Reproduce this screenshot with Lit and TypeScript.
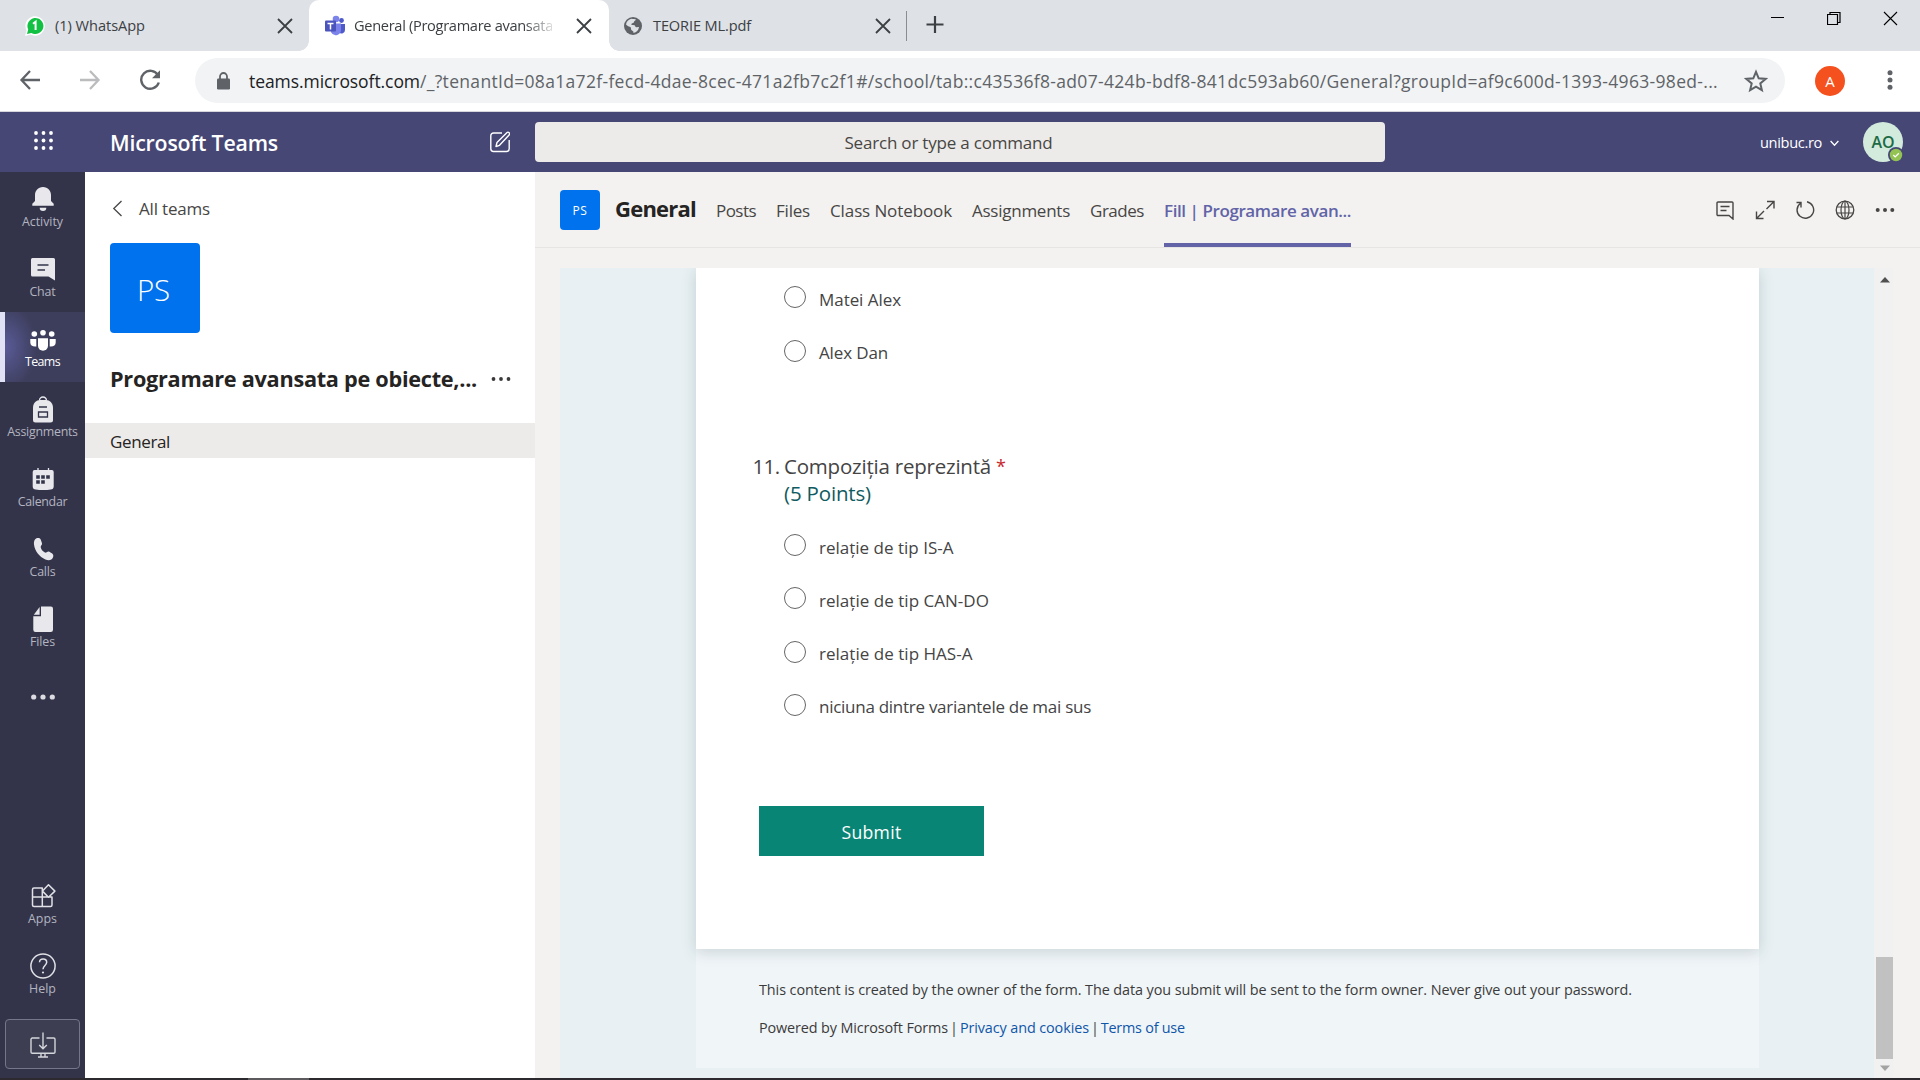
import { LitElement, html, css, svg } from "lit";
import { customElement, property } from "lit/decorators.js";

/** One line of text whose tracking is computed so that it fills a given width. */
@customElement("fit-text")
class FitText extends LitElement {
  @property() text = "";
  @property({ type: Number }) w = 0;
  static styles = css`
    :host { display: block; white-space: pre; flex: none; }
    .line { display: inline-block; vertical-align: top; }
  `;
  firstUpdated() {
    if (!this.w) return;
    const el = this.renderRoot.querySelector(".line") as HTMLElement;
    const free = this.w - el.getBoundingClientRect().width;
    el.style.letterSpacing = `${free / [...this.text].length}px`;
  }
  render() {
    return html`<span class="line">${this.text}</span>`;
  }
}

const t = (text: string, w = 0, cls = "") =>
  html`<fit-text class=${cls} .text=${text} .w=${w}></fit-text>`;

const icon = (w: number, h: number, body: unknown, cls = "") =>
  html`<svg class="ic ${cls}" width=${w} height=${h} viewBox="0 0 ${w} ${h}" fill="none">${body}</svg>`;

const closeX = icon(16, 16, svg`<path d="M1 1 15 15M15 1 1 15" stroke="#3c4043" stroke-width="1.8"/>`, "close");

const whatsapp = icon(20, 20, svg`
  <path d="M0 20 1.5 14.500A9.700 9.700 0 1 1 5.500 18.500Z" fill="#fff"/>
  <path d="M2 18 3.200 13.500A8 8 0 1 1 6.300 16.900Z" fill="#12c143"/>
  <path d="M8 7.800 10.600 5.800V14" stroke="#fff" stroke-width="2"/>`);
const teamsLogo = icon(22, 22, svg`
  <circle cx="17.500" cy="5.500" r="2.400" fill="#5059c9"/>
  <circle cx="12" cy="4" r="3.300" fill="#7b83eb"/>
  <path d="M15 9h6v6a3.500 3.500 0 0 1-6 2.500Z" fill="#5059c9"/>
  <path d="M7 8.500h10v7a5.300 5.300 0 0 1-10 1.800Z" fill="#7b83eb"/>
  <rect x="1" y="5.500" width="11" height="11" rx="1" fill="#4b53bc"/>
  <path d="M3.500 8.500h6M6.500 8.500v6" stroke="#fff" stroke-width="1.500"/>`);
const globeTab = icon(18, 18, svg`
  <circle cx="9" cy="9" r="9" fill="#5f6368"/>
  <path d="M7.500 1.800c2 .4 3.500.2 4.500.8-1 1.500-2 1.500-2.200 3-.8 1-2.300.6-2.600 2 1 1 3.500 0 4 1.600.3 1.300 2.300.9 3.800.8-.4 3-2.500 5.500-5.500 6 0-2-.5-2-1.500-2.600-1.800-1-.3-2.600-1.800-3.300C4.500 9.500 3 8.500 2 7.500 2.500 4.500 4.500 2.300 7.500 1.800Z" fill="#dee1e6"/>`);

const rail = {
  activity: icon(24, 26, svg`<path d="M12 1c5 0 8 3.700 8 8.200v5.800l2.700 2.800v2H1.300v-2l2.700-2.800V9.200C4 4.700 7 1 12 1Z" fill="#e8e8ec"/><path d="M8.700 21.800h6.600a3.300 3.300 0 0 1-6.600 0Z" fill="#e8e8ec"/>`),
  chat: icon(26, 26, svg`<path d="M2.500 2h21a1.500 1.500 0 0 1 1.500 1.500V24.500l-6.500-4H2.500A1.500 1.500 0 0 1 1 19V3.500A1.500 1.500 0 0 1 2.500 2Z" fill="#e8e8ec"/><path d="M7.500 9h11M7.500 14h7.500" stroke="#33344a" stroke-width="1.300"/>`),
  teams: icon(26, 26, svg`<g fill="#fff" transform="translate(0 1)"><circle cx="4.300" cy="7" r="2.800"/><circle cx="13" cy="5.800" r="2.800"/><circle cx="21.700" cy="7" r="2.800"/><path d="M8 11.300h10v7.500a5 5 0 0 1-10 0Z"/><path d="M.3 12h6v7.500C2.800 20 .3 18.500.3 15.500ZM25.700 12h-6v7.500c3.500.5 6-1 6-4Z"/></g>`),
  assignments: icon(24, 30, svg`<g transform="translate(0 2)"><path d="M8.500 4.500a3.500 3.500 0 0 1 7 0" stroke="#e8e8ec" stroke-width="1.300"/><path d="M2 11.500C2 7 5.500 4 9 4h6c3.500 0 7 3 7 7.500V24a2.500 2.500 0 0 1-2.500 2.500h-15A2.500 2.500 0 0 1 2 24Z" fill="#e8e8ec"/><path d="M8 11h8M7.500 16h9v5h-9Z" stroke="#33344a" stroke-width="1.300"/></g>`),
  calendar: icon(24, 26, svg`<path d="M7 2v3M17.500 2v3" stroke="#e8e8ec" stroke-width="1.300"/><path d="M3.500 4h17A2 2 0 0 1 22.700 6v14.500c0 2-1.200 2.700-3 3-4.500.8-10.500.8-15 0-1.800-.3-3-1-3-3V6A2 2 0 0 1 3.500 4Z" fill="#e8e8ec"/><path d="M5.200 9.200h3.600v3.500H5.200ZM10.200 9.200h3.600v3.500h-3.600ZM15.200 9.200h3.600v3.500h-3.600ZM5.200 14.200h3.600v3.500H5.200ZM10.200 14.200h3.600v3.500h-3.600Z" fill="#33344a"/>`),
  calls: icon(24, 26, svg`<path d="M4.200 3.200C5.500 1.800 8.500 1.300 9.700 3.500l1.300 3.800c.4 1.700-1.600 2.500-1.300 4 .5 2.400 2.300 4.300 4.200 5.200 1.600.7 2.300-1.200 4-.9l3.300 2c1.800 1.400 1.200 3.600.2 5-1.500 2-4.600 1.900-7 .8C8.500 20.800 3.800 15 3 8.500 2.800 6.500 3 4.500 4.200 3.200Z" fill="#e8e8ec"/>`),
  files: icon(24, 28, svg`<path d="M10 1.500h9.700A2.200 2.200 0 0 1 22 3.700v21a2.200 2.200 0 0 1-2.200 2.200H4.500A2.200 2.200 0 0 1 2.300 24.700V11.300H10Z" fill="#e8e8ec"/><path d="M8.600 2v7.800H2.800Z" fill="#e8e8ec"/>`),
  more: icon(26, 8, svg`<g fill="#dcdce2"><circle cx="3.700" cy="4" r="2.600"/><circle cx="13" cy="4" r="2.600"/><circle cx="22.300" cy="4" r="2.600"/></g>`),
  apps: icon(26, 26, svg`<path d="M12.300 5H4A1.500 1.500 0 0 0 2.500 6.500V22A1.500 1.500 0 0 0 4 23.500H20.500A1.500 1.500 0 0 0 22 22V14H12.300ZM2.500 14H12.300V23.500M18.500 1.700 24.900 8.100 18.500 14.200 12.500 8.100Z" stroke="#e0e0e6" stroke-width="1.500" stroke-linejoin="round"/>`),
  help: icon(26, 26, svg`<circle cx="13" cy="13" r="12.100" stroke="#e0e0e6" stroke-width="1.500"/><path d="M9.500 9.200C9.700 5 16.700 5 16.700 9.300c0 3.200-3.700 3.300-3.700 7" stroke="#e0e0e6" stroke-width="1.500"/><circle cx="13" cy="19.500" r="1.100" fill="#e0e0e6"/>`),
  download: icon(26, 28, svg`<path d="M9.500 7H2.300A1.300 1.300 0 0 0 1 8.300V21a1.300 1.300 0 0 0 1.300 1.300H23.700A1.300 1.300 0 0 0 25 21V8.300A1.300 1.300 0 0 0 23.700 7H16.500M13 1.500V17.500M9.200 14 13 17.800 16.800 14M11 22.300V26M15 22.300V26M8 26h10" stroke="#d5d5dc" stroke-width="1.400"/>`),
};

interface RailItem { label: string; w: number; icon: unknown; active?: boolean }
const TOP_ITEMS: RailItem[] = [
  { label: "Activity", w: 41, icon: rail.activity },
  { label: "Chat", w: 26, icon: rail.chat },
  { label: "Teams", w: 35, icon: rail.teams, active: true },
  { label: "Assignments", w: 70.5, icon: rail.assignments },
  { label: "Calendar", w: 49.5, icon: rail.calendar },
  { label: "Calls", w: 26, icon: rail.calls },
  { label: "Files", w: 25, icon: rail.files },
];
const BOTTOM_ITEMS: RailItem[] = [
  { label: "Apps", w: 29, icon: rail.apps },
  { label: "Help", w: 27, icon: rail.help },
];
const CHANNEL_TABS: [string, number][] = [
  ["Posts", 40], ["Files", 34], ["Class Notebook", 122], ["Assignments", 98], ["Grades", 54],
];
const ANSWERS: [string, number][] = [
  ["relație de tip IS-A", 134.5],
  ["relație de tip CAN-DO", 170],
  ["relație de tip HAS-A", 153.5],
  ["niciuna dintre variantele de mai sus", 272],
];

@customElement("app-root")
class AppRoot extends LitElement {
  static styles = css`
    :host {
      display: flex; flex-direction: column; width: 1920px; height: 1080px; overflow: hidden;
      font-family: "Open Sans", "Noto Sans", sans-serif; font-size: 17px; color: #252423; background: #fff;
    }
    * { box-sizing: border-box; }
    .ic { display: block; flex: none; }

    .strip { display: flex; height: 51px; background: #dee1e6; padding-left: 10px; font-size: 14.600px; color: #3c4043; }
    .tab { display: flex; align-items: center; width: 299px; padding: 1px 16px 0 15px; }
    .tab fit-text { margin-left: 10px; padding-bottom: 2px; }
    .tab .close { margin-left: auto; }
    .tab.on { position: relative; width: 300px; background: #fff; border-radius: 10px 10px 0 0; padding-right: 17px; }
    .tab.on::before, .tab.on::after { content: ""; position: absolute; bottom: 0; width: 10px; height: 10px; }
    .tab.on::before { left: -10px; background: radial-gradient(circle at 0 0, transparent 9.500px, #fff 10px); }
    .tab.on::after { right: -10px; background: radial-gradient(circle at 100% 0, transparent 9.500px, #fff 10px); }
    .clip { width: 198px; overflow: hidden; margin-left: 8px; -webkit-mask-image: linear-gradient(to right, #000 170px, transparent 204px); mask-image: linear-gradient(to right, #000 170px, transparent 204px); }
    .clip fit-text { margin: 0; }
    .tab.last { width: 297px; padding-right: 15px; }
    .tab.last fit-text { margin-left: 11px; }
    .rule { width: 1px; height: 30px; margin-top: 11px; background: #8a8d91; }
    .plus { margin: 15px 0 0 18px; }
    .win { display: flex; margin-left: auto; padding: 11px 22px 0 0; gap: 42px; }

    .bar { display: flex; align-items: center; height: 61px; border-bottom: 1px solid #d5d7db; padding: 0 20px 2px 19px; background: #fff; }
    .nav { display: flex; gap: 38px; width: 176px; }
    .omni { display: flex; align-items: center; width: 1590px; height: 45px; margin-top: 1px; border-radius: 23px; background: #f1f3f4; padding: 0 17px 0 22px; }
    .url { display: flex; margin-left: 19px; padding-top: 1px; color: #5f6368; font-size: 17.500px; }
    .url .host { color: #202124; }
    .omni .star { margin-left: auto; }
    .omni .lock { margin-top: 1px; }
    .me { display: grid; place-items: center; width: 30px; height: 30px; margin: 1px 0 0 30px; border-radius: 50%; background: #f4511e; color: #fff; font-size: 15px; }
    .kebab { margin-left: auto; }

    .head { display: flex; align-items: center; height: 60px; background: #464775; color: #fff; padding: 0 17px 0 34px; }
    .brand { margin-left: 56px; padding-top: 1px; font-size: 21.300px; font-weight: 600; width: 380px; }
    .search { display: grid; place-items: center; width: 850px; height: 40px; margin-left: 25px; border-radius: 4px; background: #ecebe9; color: #484644; padding-right: 23px; }
    .org { margin-left: auto; font-size: 14.600px; }
    .down { margin: 2px 0 0 8px; }
    .pic { position: relative; display: grid; place-items: center; width: 40px; height: 40px; margin-left: 24px; border-radius: 50%; background: #d2ebdd; color: #1d6b45; font-size: 16px; font-weight: 600; padding-bottom: 1px; }
    .badge { position: absolute; right: -1px; bottom: -1px; }

    .body { display: flex; flex: none; height: 906px; }
    .rail { display: flex; flex-direction: column; width: 85px; background: #33344a; color: #b4b4c0; font-size: 12.400px; }
    .item { display: flex; flex-direction: column; align-items: center; height: 70px; }
    .item .box { display: grid; place-items: center; height: 42px; padding-top: 11px; }
    .item fit-text { line-height: 16px; }
    .item.on { color: #fff; border-left: 5px solid #e2e2f6; padding-right: 5px; background: radial-gradient(ellipse 32px 44px at 0 50%, #5a5b98, #3d3e5c); }
    .more { display: grid; place-items: center; height: 70px; }
    .push { margin-top: auto; }
    .get { display: grid; place-items: center; width: 75px; height: 50px; margin: 10px 5px 9px; border: 1px solid #75768a; border-radius: 4px; background: #3d3e52; padding-top: 1px; }

    .team { width: 450px; background: #fff; }
    .back { display: flex; align-items: center; height: 71px; padding: 2px 0 0 27px; color: #484644; }
    .back fit-text { margin-left: 16px; }
    .tile { display: grid; place-items: center; width: 90px; height: 90px; margin-left: 25px; border-radius: 4px; background: #0072ed; color: #fff; font-size: 29.500px; font-weight: 300; padding: 2px 3px 0 0; }
    .name { display: flex; align-items: center; height: 90px; padding-left: 25px; font-size: 21.700px; font-weight: 700; }
    .name .ic { margin: 1px 0 0 14px; }
    .chan { display: flex; align-items: center; height: 35px; padding: 1px 0 0 25px; background: #edebe9; }

    .main { display: flex; flex-direction: column; width: 1385px; background: #f3f2f1; }
    .tabs { display: flex; height: 76px; border-bottom: 1px solid #e6e5e3; padding: 0 25px 0 25px; color: #484644; }
    .mini { display: grid; place-items: center; width: 40px; height: 40px; margin-top: 18px; border-radius: 4px; background: #0072ed; color: #fff; font-size: 12px; padding-top: 1px; }
    .title { margin-left: 15px; font-size: 22px; line-height: 72px; font-weight: 700; color: #252423; width: 101px; }
    .tabs .lnk { line-height: 78px; margin-right: 20px; }
    .tabs .cur { height: 75px; line-height: 78px; color: #6264a7; font-weight: 600; border-bottom: 4px solid #6264a7; }
    .tools { display: flex; align-items: center; gap: 20px; height: 76px; margin-left: auto; }

    .frame { display: flex; height: 810px; margin: 20px 27px 0 25px; background: #e8f0f3; }
    .view { width: 1314px; overflow: hidden; }
    .sheet { width: 1063px; margin-left: 136px; height: 800px; background: #f0f5f8; color: #444; }
    .card { height: 681px; padding: 2.700px 0 0 51px; background: #fff; box-shadow: 0 3px 14px rgba(30, 60, 70, 0.180); }
    .opt { display: flex; align-items: center; height: 53.330px; padding-left: 37px; }
    .radio { width: 22px; height: 22px; border: 1px solid #666; border-radius: 50%; background: #fff; }
    .opt fit-text { margin-left: 13px; padding-top: 4px; }
    .q { display: grid; grid-template-columns: 37px auto; margin-top: 76px; margin-bottom: 11px; font-size: 20.500px; line-height: 27px; }
    .q .num { margin-left: 5.500px; }
    .q .row { display: flex; }
    .q .req { color: #c8262c; margin-left: 5px; font-size: 18px; }
    .q .pts { grid-column: 2; color: #0f5b5f; }
    .submit { display: grid; place-items: center; width: 225px; height: 50px; margin-top: 74px; margin-left: 12px; background: #098576; color: #fff; padding-top: 3px; font-size: 17.600px; }
    .note { padding: 27px 0 0 63px; font-size: 14.400px; line-height: 28px; color: #3b3b3b; }
    .note .row { display: flex; margin-top: 10px; gap: 2px; }
    .note .a { color: #0f55a8; }
    .scroll { display: flex; flex-direction: column; align-items: center; width: 19px; background: #f1f1f1; padding-top: 9px; }
    .thumb { width: 17px; height: 102px; margin: 674px 0 6px 2px; background: #c1c1c1; }
    .scroll .ic { margin-left: 2px; }
    .task { display: flex; flex: none; height: 2px; padding-left: 248px; background: #2c2a2e; }
    .task .seg { width: 61px; background: #5c5a5c; }
  `;

  private railItem(i: RailItem) {
    return html`<div class="item ${i.active ? "on" : ""}">
      <div class="box">${i.icon}</div>${t(i.label, i.w)}
    </div>`;
  }

  private option(text: string, w: number) {
    return html`<div class="opt"><span class="radio"></span>${t(text, w)}</div>`;
  }

  private chrome() {
    return html`
      <div class="strip">
        <div class="tab">${whatsapp}${t("(1) WhatsApp", 90)}${closeX}</div>
        <div class="tab on">${teamsLogo}<div class="clip">${t("General (Programare avansata", 199)}</div>${closeX}</div>
        <div class="tab last">${globeTab}${t("TEORIE ML.pdf", 98)}${closeX}</div>
        <div class="rule"></div>
        ${icon(20, 20, svg`<path d="M10 1v17M1.500 9.500h17" stroke="#3c4043" stroke-width="2.200"/>`, "plus")}
        <div class="win">
          ${icon(14, 14, svg`<path d="M0 6.500h13" stroke="#000"/>`)}
          ${icon(14, 14, svg`<path d="M.5 3.500h10v10H.5ZM3 3.500V1.500h10v10h-2.500" stroke="#000" stroke-width="1.200"/>`)}
          ${icon(15, 15, svg`<path d="M1 1 14 14M14 1 1 14" stroke="#000" stroke-width="1.100"/>`)}
        </div>
      </div>
      <div class="bar">
        <div class="nav">
          ${icon(22, 22, svg`<path d="M21 11H3M11 2 2.500 11 11 20" stroke="#5f6368" stroke-width="2.300"/>`)}
          ${icon(22, 22, svg`<path d="M1 11H19M11 2 19.500 11 11 20" stroke="#babcbe" stroke-width="2.300"/>`)}
          ${icon(22, 22, svg`<path d="M19 6.200A9 9 0 1 0 19.800 13.500" stroke="#5f6368" stroke-width="2.400"/><path d="M21 1.200V9.200H13Z" fill="#5f6368"/>`)}
        </div>
        <div class="omni">
          ${icon(13, 18, svg`<path d="M3 7V4.500a3.500 3.500 0 0 1 7 0V7" stroke="#5f6368" stroke-width="1.800"/><rect y="6.500" width="13" height="11" rx="1.200" fill="#5f6368"/>`, "lock")}
          <div class="url">
            ${t("teams.microsoft.com", 171, "host")}
            ${t("/_?tenantId=08a1a72f-fecd-4dae-8cec-471a2fb7c2f1#/school/tab::c43536f8-ad07-424b-bdf8-841dc593ab60/General?groupId=af9c600d-1393-4963-98ed-...", 1298)}
          </div>
          ${icon(24, 24, svg`<path d="M12 2.800 14.700 9.300 21.600 9.900 16.300 14.400 17.900 21.200 12 17.600 6.100 21.200 7.700 14.400 2.400 9.900 9.300 9.300Z" stroke="#5f6368" stroke-width="2"/>`, "star")}
        </div>
        <div class="me">${t("A")}</div>
        ${icon(18, 20, svg`<g fill="#5f6368"><circle cx="8" cy="2.700" r="2.500"/><circle cx="8" cy="10" r="2.500"/><circle cx="8" cy="17.300" r="2.500"/></g>`, "kebab")}
      </div>`;
  }

  private header() {
    const dots = [2, 9.5, 17];
    return html`<div class="head">
      ${icon(20, 22, dots.map((y) => dots.map((x) => svg`<circle cx=${x} cy=${y} r="1.900" fill="#fff"/>`)))}
      <div class="brand">${t("Microsoft Teams", 168)}</div>
      ${icon(20, 22, svg`<path d="M12 2H3.500A2.700 2.700 0 0 0 .8 4.700V17.800a2.700 2.700 0 0 0 2.700 2.700H16.500a2.700 2.700 0 0 0 2.700-2.700V9M6 15.500 7 11.500 16.800 1.700a1.500 1.500 0 0 1 2.300 2.300L9.500 14.300Z" stroke="#fff" stroke-width="1.400" stroke-linejoin="round"/>`)}
      <div class="search">${t("Search or type a command", 208)}</div>
      <div class="org">${t("unibuc.ro", 62)}</div>
      ${icon(9, 7, svg`<path d="M.6 1 4.500 5.300 8.400 1" stroke="#fff" stroke-width="1.300"/>`, "down")}
      <div class="pic">${t("AO", 23)}
        ${icon(16, 16, svg`<circle cx="8" cy="8" r="8" fill="#464775"/><circle cx="8" cy="8" r="6.200" fill="#92c353"/><path d="M5.300 8 7.200 9.900 10.800 6.200" stroke="#fff" stroke-width="1.300"/>`, "badge")}
      </div>
    </div>`;
  }

  private tools() {
    const s = "#484644";
    return html`<div class="tools">
      ${icon(20, 20, svg`<path d="M3 2H17A1 1 0 0 1 18 3V19L14 15.500H3A1 1 0 0 1 2 14.500V3A1 1 0 0 1 3 2ZM5.500 6.500h9M5.500 10.500h6" stroke=${s} stroke-width="1.400"/>`)}
      ${icon(20, 20, svg`<path d="M12 1.500h7v7M19 1.500 11.500 9M1.500 11.500v7h7M1.500 18.500 9 11" stroke=${s} stroke-width="1.400"/>`)}
      ${icon(20, 20, svg`<path d="M5.500 3.200A8.300 8.300 0 1 0 12 1.800M1.500 2.500H6V7.500" stroke=${s} stroke-width="1.400"/>`)}
      ${icon(20, 20, svg`<circle cx="10" cy="10" r="8.800" stroke=${s} stroke-width="1.300"/><ellipse cx="10" cy="10" rx="4" ry="8.800" stroke=${s} stroke-width="1.200"/><path d="M1.800 7H18.200M1.800 13H18.200M10 1.200V18.800" stroke=${s} stroke-width="1.200"/>`)}
      ${icon(20, 20, svg`<g fill=${s}><circle cx="2.700" cy="10" r="2"/><circle cx="10" cy="10" r="2"/><circle cx="17.300" cy="10" r="2"/></g>`)}
    </div>`;
  }

  render() {
    return html`
      ${this.chrome()} ${this.header()}
      <div class="body">
        <div class="rail">
          ${TOP_ITEMS.map((i) => this.railItem(i))}
          <div class="more">${rail.more}</div>
          <div class="push"></div>
          ${BOTTOM_ITEMS.map((i) => this.railItem(i))}
          <div class="get">${rail.download}</div>
        </div>
        <div class="team">
          <div class="back">
            ${icon(11, 17, svg`<path d="M9.500 1 1.800 8.500 9.500 16" stroke="#484644" stroke-width="1.300"/>`)}
            ${t("All teams", 71)}
          </div>
          <div class="tile">${t("PS", 33)}</div>
          <div class="name">
            ${t("Programare avansata pe obiecte,...", 367)}
            ${icon(20, 6, svg`<g fill="#3b3a39"><circle cx="2.500" cy="3" r="1.900"/><circle cx="10" cy="3" r="1.900"/><circle cx="17.500" cy="3" r="1.900"/></g>`)}
          </div>
          <div class="chan">${t("General", 60)}</div>
        </div>
        <div class="main">
          <div class="tabs">
            <div class="mini">${t("PS", 15)}</div>
            <div class="title">${t("General", 81)}</div>
            ${CHANNEL_TABS.map(([s, w]) => t(s, w, "lnk"))}
            <div class="cur">${t("Fill | Programare avan...", 187)}</div>
            ${this.tools()}
          </div>
          <div class="frame">
            <div class="view">
              <div class="sheet">
                <div class="card">
                  ${this.option("Matei Alex", 82)} ${this.option("Alex Dan", 69)}
                  <div class="q">
                    <div class="num">${t("11.", 27)}</div>
                    <div class="row">${t("Compoziția reprezintă", 207)}${t("*", 0, "req")}</div>
                    <div class="pts">${t("(5 Points)", 87)}</div>
                  </div>
                  ${ANSWERS.map(([s, w]) => this.option(s, w))}
                  <div class="submit">${t("Submit", 60)}</div>
                </div>
                <div class="note">
                  ${t("This content is created by the owner of the form. The data you submit will be sent to the form owner. Never give out your password.", 873)}
                  <div class="row">
                    ${t("Powered by Microsoft Forms", 189)}${t("|")}${t("Privacy and cookies", 129, "a")}${t("|")}${t("Terms of use", 84, "a")}
                  </div>
                </div>
              </div>
            </div>
            <div class="scroll">
              ${icon(10, 6, svg`<path d="M0 5.500 5 0 10 5.500Z" fill="#505050"/>`)}
              <div class="thumb"></div>
              ${icon(10, 6, svg`<path d="M0 .5H10L5 6Z" fill="#a3a3a3"/>`)}
            </div>
          </div>
        </div>
      </div>
      <div class="task"><div class="seg"></div></div>`;
  }
}
